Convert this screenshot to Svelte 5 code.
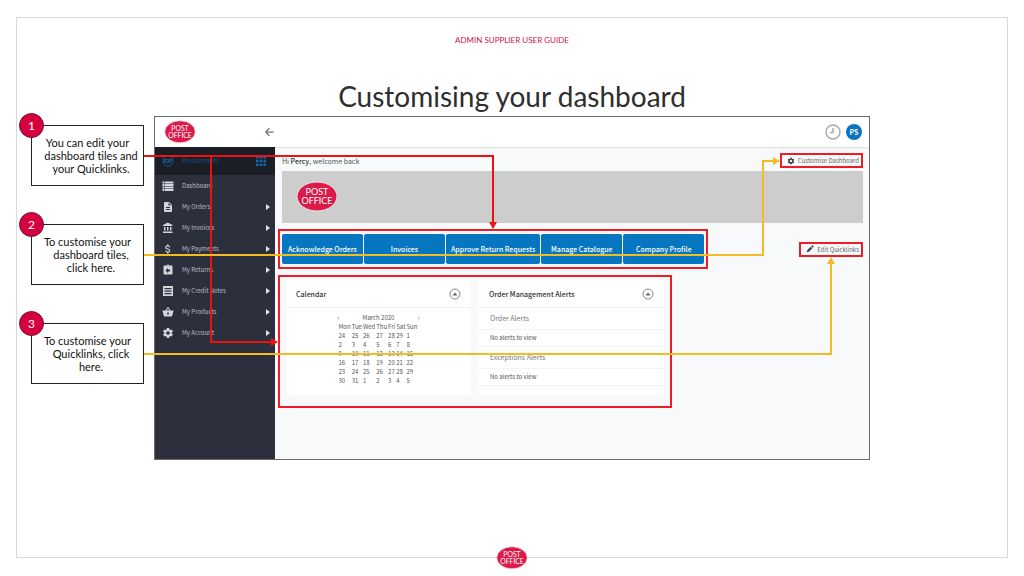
<script lang="ts">
	import { onMount } from 'svelte';

	const callouts = [
		['You can edit your', 'dashboard tiles and', 'your Quicklinks.'],
		['To customise your', 'dashboard tiles,', 'click here.'],
		['To customise your', 'Quicklinks, click', 'here.']
	];

	const menu = [
		{ name: 'Dashboard', icon: 'M1 3h4v4H1zM6 3h17v4H6zM1 8h4v4H1zM6 8h17v4H6zM1 13h4v4H1zM6 13h17v4H6zM1 18h4v4H1zM6 18h17v4H6z' },
		{
			name: 'My Orders',
			icon: 'M14 2H6c-1.100 0-2 .9-2 2v16c0 1.100.9 2 2 2h12c1.100 0 2-.9 2-2V8l-6-6zm2 16H8v-2h8v2zm0-4H8v-2h8v2zm-3-5V3.500L18.500 9H13z'
		},
		{ name: 'My Invoices', icon: 'M4 10v7h3v-7H4zm6 0v7h3v-7h-3zM2 22h19v-3H2v3zm14-12v7h3v-7h-3zM11.500 1L2 6v2h19V6l-9.500-5z' },
		{
			name: 'My Payments',
			icon: 'M11.800 10.900c-2.270-.59-3-1.200-3-2.150 0-1.090 1.010-1.850 2.700-1.850 1.780 0 2.440.85 2.500 2.100h2.210c-.07-1.720-1.120-3.300-3.210-3.810V3h-3v2.160c-1.940.42-3.500 1.680-3.500 3.610 0 2.310 1.910 3.460 4.700 4.130 2.500.6 3 1.480 3 2.410 0 .69-.49 1.790-2.700 1.790-2.060 0-2.870-.92-2.980-2.100h-2.200c.12 2.190 1.760 3.420 3.680 3.830V21h3v-2.150c1.950-.37 3.500-1.500 3.500-3.550 0-2.840-2.430-3.810-4.700-4.400z'
		},
		{
			name: 'My Returns',
			icon: 'M19 3h-4.180C14.400 1.840 13.300 1 12 1s-2.400.84-2.820 2H5c-1.100 0-2 .9-2 2v14c0 1.100.9 2 2 2h14c1.100 0 2-.9 2-2V5c0-1.100-.9-2-2-2zm-7 0c.55 0 1 .45 1 1s-.45 1-1 1-1-.45-1-1 .45-1 1-1zm4 12h-4v3l-5-5 5-5v3h4v4z'
		},
		{ name: 'My Credit Notes', icon: 'M2 2v20h20V2H2zm3 4h14v2.500H5V6zm0 5h14v2.500H5V11zm0 5h14v2.500H5V16z' },
		{
			name: 'My Products',
			icon: 'M17.210 9l-4.380-6.560c-.38-.57-1.280-.57-1.660 0L6.790 9H2c-.55 0-1 .45-1 1l2.580 9.540C3.810 20.380 4.580 21 5.500 21h13c.92 0 1.690-.62 1.930-1.460L23 10c0-.55-.45-1-1-1h-4.790zM9 9l3-4.400L15 9H9zm3 8c-1.100 0-2-.9-2-2s.9-2 2-2 2 .9 2 2-.9 2-2 2z'
		},
		{ name: 'My Account', icon: '' }
	];

	const gear =
		'M19.430 12.980c.04-.32.07-.64.07-.98s-.03-.66-.07-.98l2.110-1.650c.19-.15.24-.42.12-.64l-2-3.460c-.12-.22-.39-.3-.61-.22l-2.490 1c-.52-.4-1.080-.73-1.690-.98l-.38-2.650C14.460 2.180 14.250 2 14 2h-4c-.25 0-.46.18-.49.42l-.38 2.650c-.61.25-1.170.59-1.690.98l-2.490-1c-.23-.09-.49 0-.61.22l-2 3.460c-.13.22-.07.49.12.64l2.110 1.650c-.04.32-.07.65-.07.98s.03.66.07.98l-2.110 1.650c-.19.15-.24.42-.12.64l2 3.460c.12.22.39.3.61.22l2.490-1c.52.4 1.080.73 1.690.98l.38 2.650c.03.24.24.42.49.42h4c.25 0 .46-.18.49-.42l.38-2.650c.61-.25 1.170-.59 1.690-.98l2.490 1c.23.09.49 0 .61-.22l2-3.460c.12-.22.07-.49-.12-.64l-2.110-1.650zM12 15.500c-1.930 0-3.500-1.570-3.500-3.500s1.570-3.500 3.500-3.500 3.500 1.570 3.500 3.500-1.570 3.500-3.500 3.500z';

	const tiles = [
		'Acknowledge Orders',
		'Invoices',
		'Approve Return Requests',
		'Manage Catalogue',
		'Company Profile'
	];

	const days = ['Mon', 'Tue', 'Wed', 'Thu', 'Fri', 'Sat', 'Sun'];
	const weeks = [
		[24, 25, 26, 27, 28, 29, 1],
		[2, 3, 4, 5, 6, 7, 8],
		[9, 10, 11, 12, 13, 14, 15],
		[16, 17, 18, 19, 20, 21, 22],
		[23, 24, 25, 26, 27, 28, 29],
		[30, 31, 1, 2, 3, 4, 5]
	];

	let stage: HTMLElement;
	let notes: HTMLElement[] = $state([]);
	let customiseBox: HTMLElement;
	let tilesBox: HTMLElement;
	let quicklinksBox: HTMLElement;
	let panelsBox: HTMLElement;

	type Line = { d: string; color: string };
	let lines: Line[] = $state([]);

	function box(el: HTMLElement) {
		const s = stage.getBoundingClientRect();
		const r = el.getBoundingClientRect();
		return {
			left: Math.round(r.left - s.left),
			right: Math.round(r.right - s.left),
			top: Math.round(r.top - s.top),
			bottom: Math.round(r.bottom - s.top),
			cx: Math.round(r.left - s.left + r.width / 2),
			cy: Math.round(r.top - s.top + r.height / 2)
		};
	}

	// route each connector from its note to the area it explains
	function connect() {
		const [one, two, three] = notes.map(box);
		const c = box(customiseBox);
		const t = box(tilesBox);
		const q = box(quicklinksBox);
		const p = box(panelsBox);
		const fork = Math.round((one.right + p.left) / 2);
		const turn = c.left - 17;

		lines = [
			{ color: 'red', d: `M${one.right} ${one.cy}H${t.cx}V${t.top - 5}` },
			{ color: 'red', d: `M${fork} ${one.cy}V${p.cy}H${p.left - 5}` },
			{ color: 'gold', d: `M${two.right} ${two.cy}H${turn}V${c.cy}H${c.left - 5}` },
			{ color: 'gold', d: `M${three.right} ${three.cy}H${q.cx}V${q.bottom + 5}` }
		];
	}

	onMount(() => {
		connect();
		const observer = new ResizeObserver(connect);
		observer.observe(stage);
		return () => observer.disconnect();
	});
</script>

{#snippet logo()}
	<svg class="logo" viewBox="0 0 42 31" role="img" aria-label="Post Office">
		<ellipse cx="21" cy="15.500" rx="20" ry="14.500" />
		<text x="21" y="14">POST</text>
		<text x="21" y="23">OFFICE</text>
	</svg>
{/snippet}

{#snippet collapse(label: string)}
	<button class="collapse" aria-label="Collapse {label}">
		<svg viewBox="0 0 12 12"><circle cx="6" cy="6" r="5" /><path d="M3.500 7.500h5L6 4.500z" /></svg>
	</button>
{/snippet}

<div class="slide">
	<div class="frame">
		<p class="guide">ADMIN SUPPLIER USER GUIDE</p>
		<h1>Customising your dashboard</h1>

		<div class="stage" bind:this={stage}>
			<ol class="callouts">
				{#each callouts as callout, i}
					<li bind:this={notes[i]}>
						<span class="badge">{i + 1}</span>
						<p>
							{#each callout as line, n}{#if n}<br />{/if}{line}{/each}
						</p>
					</li>
				{/each}
			</ol>

			<div class="app">
				<header>
					{@render logo()}
					<button class="back" aria-label="Back">
						<svg viewBox="0 0 12 12"><path d="M11.500 6H2M6.500 1.500L2 6l4.500 4.500" /></svg>
					</button>
					<button class="clock" aria-label="Recent activity">
						<svg viewBox="0 0 16 16"><circle cx="8" cy="8" r="7" /><path d="M8 4v4.500H5" /></svg>
					</button>
					<button class="avatar">PS</button>
				</header>

				<div class="columns">
					<nav>
						<a class="section" href="#procurement">
							<svg class="p2p" viewBox="0 0 14 14">
								<circle cx="7" cy="7" r="6" />
								<text x="7" y="9">P2P</text>
							</svg>
							<span>Procurement</span>
							<svg class="grid" viewBox="0 0 10 10">
								<path
									d="M0 0h2.600v2.600H0zM3.700 0h2.600v2.600H3.700zM7.400 0H10v2.600H7.400zM0 3.700h2.600v2.600H0zM3.700 3.700h2.600v2.600H3.700zM7.400 3.700H10v2.600H7.400zM0 7.400h2.600V10H0zM3.700 7.400h2.600V10H3.700zM7.400 7.400H10V10H7.400z"
								/>
							</svg>
						</a>
						{#each menu as item, i}
							<a href="#{item.name}">
								<svg class="icon" viewBox="0 0 24 24"><path d={item.icon || gear} /></svg>
								<span>{item.name}</span>
								{#if i > 0}<i class="arrow"></i>{/if}
							</a>
						{/each}
					</nav>

					<main>
						<div class="welcome">
							<p>Hi <b>Percy</b>, welcome back</p>
							<button class="action" bind:this={customiseBox}>
								<svg viewBox="0 0 24 24"><path d={gear} /></svg>
								Customise Dashboard
							</button>
						</div>

						<div class="banner">{@render logo()}</div>

						<div class="links">
							<div class="tiles" bind:this={tilesBox}>
								{#each tiles as tile}
									<button>{tile}</button>
								{/each}
							</div>
							<button class="action" bind:this={quicklinksBox}>
								<svg viewBox="0 0 24 24">
									<path d="M2 22l2-7L14 5l5 5L9 20zM15.500 3.500l2-2c1-1 2-1 3 0l2 2c1 1 1 2 0 3l-2 2z" />
								</svg>
								Edit Quicklinks
							</button>
						</div>

						<div class="lower">
							<div class="panels" bind:this={panelsBox}>
								<section>
									<div class="head">
										<h2>Calendar</h2>
										{@render collapse('Calendar')}
									</div>
									<div class="calendar">
										<div class="month">
											<button aria-label="Previous month">‹</button>
											<span>March 2020</span>
											<button aria-label="Next month">›</button>
										</div>
										<table>
											<thead>
												<tr>{#each days as day}<th scope="col">{day}</th>{/each}</tr>
											</thead>
											<tbody>
												{#each weeks as week}
													<tr>{#each week as date}<td>{date}</td>{/each}</tr>
												{/each}
											</tbody>
										</table>
									</div>
								</section>

								<section>
									<div class="head">
										<h2>Order Management Alerts</h2>
										{@render collapse('Order Management Alerts')}
									</div>
									<h3>Order Alerts</h3>
									<p>No alerts to view</p>
									<h3>Exceptions Alerts</h3>
									<p>No alerts to view</p>
								</section>
							</div>
						</div>
					</main>
				</div>
			</div>

			<svg class="connectors" aria-hidden="true">
				<defs>
					{#each ['red', 'gold'] as color}
						<marker
							id="tip-{color}"
							class={color}
							viewBox="0 0 7 8"
							refX="2"
							refY="4"
							markerWidth="7"
							markerHeight="8"
							markerUnits="userSpaceOnUse"
							orient="auto"
						>
							<path d="M0 0l7 4-7 4z" />
						</marker>
					{/each}
				</defs>
				{#each lines as line}
					<path class="line {line.color}" d={line.d} marker-end="url(#tip-{line.color})" />
				{/each}
			</svg>
		</div>

		<div class="footer-logo">{@render logo()}</div>
	</div>
</div>

<style>
	:global(body) {
		margin: 0;
		background: #fff;
	}

	* {
		box-sizing: border-box;
	}

	p,
	h1,
	h2,
	h3,
	ol {
		margin: 0;
		padding: 0;
	}

	button {
		background: none;
		border: none;
		color: inherit;
		font: inherit;
		margin: 0;
		padding: 0;
	}

	svg {
		display: block;
	}

	.slide {
		display: flex;
		font-family: Lato, sans-serif;
		font-variant-ligatures: none;
		min-height: 100vh;
		padding: 17px 16px 18px;
	}

	.frame {
		border: 1px solid #d9d9d9;
		flex: 1;
		position: relative;
	}

	.guide {
		color: #d2124a;
		font-size: 8px;
		line-height: 14px;
		margin-top: 15px;
		text-align: center;
	}

	h1 {
		color: #2e2e2e;
		font-size: 28px;
		font-weight: 400;
		line-height: 40px;
		padding-top: 29px;
		text-align: center;
	}

	.stage {
		align-items: flex-start;
		display: flex;
		gap: 10px;
		margin: 0 137px 40px 14px;
		position: relative;
	}

	.callouts {
		display: flex;
		flex: 0 0 113px;
		flex-direction: column;
		gap: 38px;
		list-style: none;
		padding-top: 9px;
	}

	.callouts li {
		background: #fff;
		border: 1px solid #222;
		min-height: 61px;
		padding: 10px 0 10px 7px;
		position: relative;
	}

	.callouts p {
		color: #111;
		font-size: 11px;
		line-height: 13px;
		text-align: center;
		text-indent: -7px;
		white-space: nowrap;
	}

	.badge {
		align-items: center;
		background: #d50040;
		border: 1px solid #7a1030;
		border-radius: 50%;
		color: #fff;
		display: flex;
		font-size: 12px;
		height: 25px;
		justify-content: center;
		left: -13px;
		position: absolute;
		top: -13px;
		width: 25px;
	}

	.app {
		border: 1px solid #6b6b6b;
		color: #555;
		flex: 1;
		font-family: 'Noto Sans CJK SC', 'Noto Sans', sans-serif;
		font-size: 7px;
		line-height: 12px;
		min-width: 0;
	}

	.logo ellipse {
		fill: #dc1a4a;
		stroke: #f3e3e7;
		stroke-width: 1;
	}

	.logo text {
		fill: #fff;
		font-family: Lato, sans-serif;
		font-size: 9px;
		text-anchor: middle;
	}

	header {
		align-items: center;
		display: flex;
		height: 30px;
		padding: 0 7px 0 9px;
	}

	header .logo {
		width: 32px;
	}

	.back {
		margin-left: 68px;
	}

	.back svg {
		fill: none;
		stroke: #777;
		stroke-width: 1.500;
		width: 10px;
	}

	.clock {
		margin: 0 5px 0 auto;
	}

	.clock svg {
		fill: none;
		stroke: #aaa;
		stroke-width: 1.500;
		width: 16px;
	}

	.avatar {
		background: #0a74bf;
		border-radius: 50%;
		color: #fff;
		font-weight: 700;
		height: 16px;
		width: 16px;
	}

	.columns {
		display: flex;
	}

	nav {
		background: #2c303c;
		flex: 0 0 120px;
	}

	nav a {
		align-items: center;
		color: #b9bbc3;
		display: flex;
		font-size: 6px;
		gap: 8px;
		height: 21px;
		padding: 0 5px 0 7px;
		text-decoration: none;
	}

	nav span {
		flex: 1;
	}

	nav .section {
		background: #1c1e27;
		color: #14568a;
		height: 28px;
	}

	.icon {
		fill: #d3d5db;
		width: 12px;
	}

	.arrow {
		border: 3px solid transparent;
		border-left: 4px solid #e2e3e7;
		border-right: 0;
	}

	.p2p {
		fill: none;
		stroke: #14609c;
		width: 12px;
	}

	.p2p text {
		fill: #1673b8;
		font-size: 5px;
		font-weight: 700;
		stroke: none;
		text-anchor: middle;
	}

	.grid {
		fill: #1268a8;
		margin-right: 4px;
		width: 10px;
	}

	main {
		background: #f8f9fb;
		box-shadow: inset 0 2px 2px -1px #ddd;
		flex: 1;
		min-width: 0;
		padding: 6px 6px 51px 3px;
	}

	.welcome {
		align-items: center;
		display: flex;
		justify-content: space-between;
		padding: 0 0 3px 4px;
	}

	.welcome b {
		color: #333;
		font-weight: 500;
	}

	.action {
		align-items: center;
		border: 2px solid #ee1c25;
		color: #666;
		display: flex;
		font-size: 6px;
		gap: 3px;
		height: 15px;
		line-height: 11px;
		padding: 0 2px 0 5px;
		white-space: nowrap;
	}

	.action svg {
		fill: #3b414d;
		width: 8px;
	}

	.banner {
		background: #cdcdcd;
		margin-left: 4px;
		padding: 10px 14px 11px;
	}

	.banner .logo {
		width: 42px;
	}

	.links {
		align-items: center;
		display: flex;
		justify-content: space-between;
		padding: 6px 0;
	}

	.tiles {
		border: 2px solid #ee1c25;
		display: flex;
		gap: 1px;
		padding: 3px 2px;
	}

	.tiles button {
		background: #0676c0;
		border-radius: 2px;
		color: #fff;
		font-weight: 500;
		height: 30px;
		min-width: 81px;
		padding: 0 5px;
		white-space: nowrap;
	}

	.lower {
		display: grid;
		grid-template-columns: 33fr 16fr;
	}

	.panels {
		border: 2px solid #ee1c25;
		display: grid;
		gap: 8px;
		grid-template-columns: 1fr 1fr;
		padding: 3px 6px 11px;
	}

	section {
		background: #fff;
	}

	.head {
		align-items: center;
		border-bottom: 1px solid #f2f3f5;
		display: flex;
		height: 28px;
		justify-content: space-between;
		padding: 0 10px;
	}

	h2 {
		color: #333;
		font-size: 7px;
		font-weight: 500;
		line-height: 12px;
	}

	.collapse svg {
		fill: #666;
		width: 12px;
	}

	.collapse circle {
		fill: none;
		stroke: #888;
	}

	.calendar {
		font-size: 6px;
		line-height: 9px;
		margin: 0 auto;
		padding: 5px 0 10px;
		width: 82px;
	}

	.month {
		display: flex;
		justify-content: space-between;
	}

	table {
		border-collapse: collapse;
	}

	th,
	td {
		font-weight: 400;
		padding: 0 0 0 1px;
		text-align: left;
	}

	h3 {
		border-bottom: 1px solid #f2f3f5;
		color: #777;
		font-size: 7px;
		font-weight: 400;
		line-height: 21px;
		padding: 0 11px;
	}

	section p {
		border-bottom: 1px solid #f2f3f5;
		font-size: 6px;
		line-height: 16px;
		padding: 0 11px;
	}

	.connectors {
		height: 100%;
		left: 0;
		overflow: visible;
		pointer-events: none;
		position: absolute;
		top: 0;
		width: 100%;
	}

	.line {
		fill: none;
		stroke-width: 2;
	}

	.line.red {
		stroke: #ee1111;
	}

	.line.gold {
		stroke: #f2bd22;
	}

	marker.red {
		fill: #ee1111;
	}

	marker.gold {
		fill: #f2bd22;
	}

	.footer-logo {
		bottom: -13px;
		left: 50%;
		position: absolute;
		transform: translateX(-50%);
	}

	.footer-logo .logo {
		width: 32px;
	}
</style>
